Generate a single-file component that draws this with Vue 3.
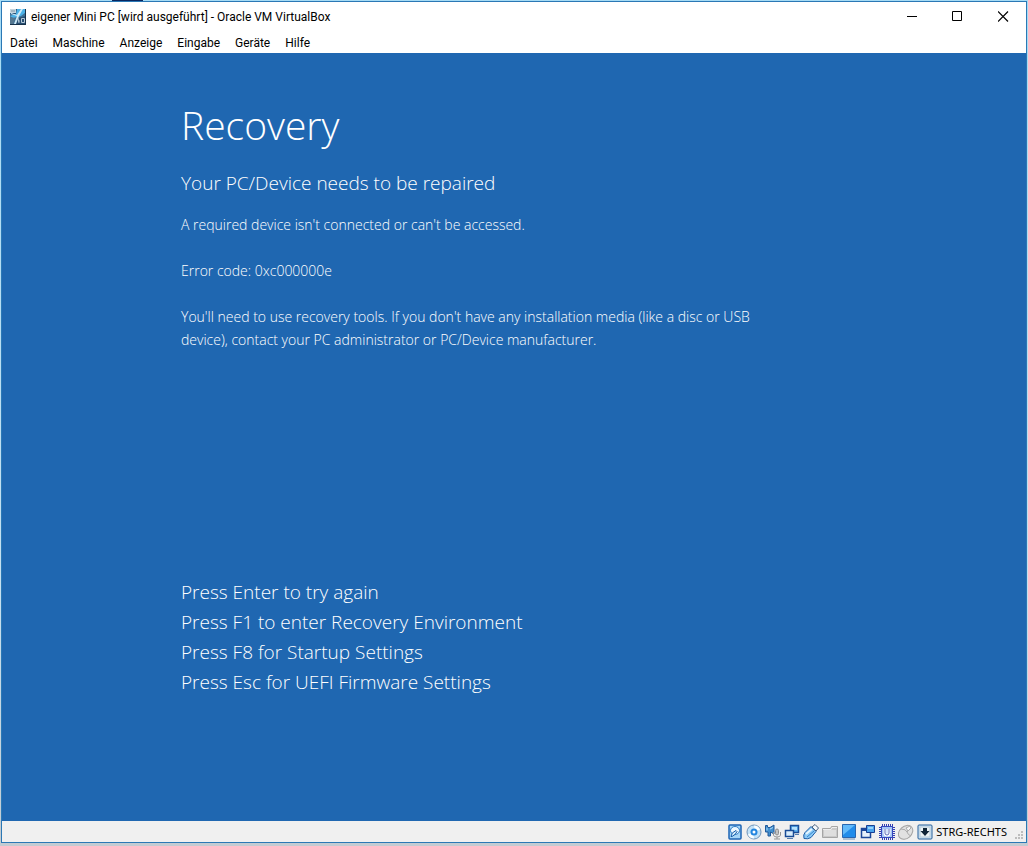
<script setup>
const menus = ['Datei', 'Maschine', 'Anzeige', 'Eingabe', 'Geräte', 'Hilfe']
const options = [
  'Press Enter to try again',
  'Press F1 to enter Recovery Environment',
  'Press F8 for Startup Settings',
  'Press Esc for UEFI Firmware Settings',
]
</script>

<template>
  <div class="desktop">
    <span class="backdrop-strip"></span>
    <div class="window">
      <header class="titlebar">
        <svg class="app-icon" viewBox="0 0 16 16" aria-hidden="true">
          <rect width="16" height="16" fill="#284f73" />
          <path d="M0 4l8 2 8-4v5l-8 2-3 7H0z" fill="#3f7196" />
          <path d="M0 0h6v4H0z" fill="#c4d5df" />
          <path d="M1 2h4" stroke="#8198a8" />
          <path d="M7 0h9v3l-5 4-8 2-3-2 6-2z" fill="#4cb2e8" />
          <path d="M11 0h2L9 7l-3 8H4l3-8-6-2V4l6 2z" fill="#cfeaf7" />
          <path d="M0 8l5 1-2 7H0z" fill="#557790" />
          <path d="M8 9l1 5M8 12h2M11.500 9.500h3v4h-3z" fill="none" stroke="#b5c9d8" />
          <path d="M0 15.500h16M15.500 0v16" stroke="#17324b" />
        </svg>
        <h1 class="title">eigener Mini PC [wird ausgeführt] - Oracle VM VirtualBox</h1>
        <div class="controls">
          <button type="button" aria-label="Minimieren">
            <svg viewBox="0 0 11 11"><path d="M1 5.500h10" /></svg>
          </button>
          <button type="button" aria-label="Maximieren">
            <svg viewBox="0 0 11 11"><path d="M.5 .5h9v9h-9z" /></svg>
          </button>
          <button type="button" aria-label="Schließen">
            <svg viewBox="0 0 11 11"><path d="M0 .5l10 10M10 .5l-10 10" stroke-width="1.200" /></svg>
          </button>
        </div>
      </header>

      <nav class="menubar">
        <button v-for="m in menus" :key="m" type="button">{{ m }}</button>
      </nav>

      <main class="screen">
        <h2>Recovery</h2>
        <h3>Your PC/Device needs to be repaired</h3>
        <div class="details">
          <p>A required device isn't connected or can't be accessed.</p>
          <p>Error code: 0xc000000e</p>
          <p>You'll need to use recovery tools. If you don't have any installation media (like a disc or USB<br />device), contact your PC administrator or PC/Device manufacturer.</p>
        </div>
        <ul class="options">
          <li v-for="o in options" :key="o">{{ o }}</li>
        </ul>
      </main>

      <footer class="statusbar">
        <svg viewBox="0 0 16 16" aria-label="Festplatte">
          <rect x="2" y="1" width="12" height="14" rx="1" fill="#a5d6f8" stroke="#1d64b4" stroke-width="1.500" />
          <ellipse cx="8" cy="6.500" rx="4.500" ry="4" fill="#eff9ff" stroke="#2c7bc5" />
          <path d="M4 12.500q0-4 5-6l1 1q-1 3-5 5z" fill="#d7effd" stroke="#165da9" />
        </svg>
        <svg viewBox="0 0 16 16" aria-label="CD-Laufwerk">
          <circle cx="8" cy="8" r="7" fill="#c2e2f8" stroke="#6f94ba" />
          <path d="M8 1.500a6.500 6.500 0 0 1 6 4L9 8zM8 14.500a6.500 6.500 0 0 1-6-4L7 8z" fill="#fbfeff" />
          <circle cx="8" cy="8" r="3.500" fill="#2486df" />
          <circle cx="8" cy="8" r="1.500" fill="#fff" />
        </svg>
        <svg viewBox="0 0 16 16" aria-label="Audio">
          <path d="M.5 1.500h2v2H5l4-2.500v9L5.500 8v4H3V8H.5z" fill="#438fce" stroke="#20599a" />
          <path d="M2 3.500v3M5 5l3-1.500" stroke="#a6dafa" />
          <rect x="10.500" y="5" width="3" height="6" rx="1.500" fill="#c2c2c2" stroke="#8e8e8e" />
          <path d="M8.500 8v3q0 2 3.500 2t3.500-2V8M12 13v2M9 15h6" fill="none" stroke="#969696" />
        </svg>
        <svg viewBox="0 0 16 16" aria-label="Netzwerk">
          <path d="M6.500 1.500h8v7h-8z" fill="#5eb3f2" stroke="#194c96" stroke-width="1.500" />
          <path d="M8 3h5v3H8z" fill="#b5e1fc" />
          <path d="M1.500 6.500h8v6h-8z" fill="#d9edfb" stroke="#194c96" stroke-width="1.500" />
          <path d="M11 10.500h4M3 14.500h6" stroke="#557eae" />
        </svg>
        <svg viewBox="0 0 16 16" aria-label="USB">
          <path d="M1 14.500q-1-4 1-6l6-6 5 5-5 6q-3 2-7 1z" fill="#8bc9f5" stroke="#1e5fa9" />
          <path d="M9 3l3-2.500 3.500 3.500L13 7z" fill="#f5f8fb" stroke="#47617f" />
          <path d="M3 10l6-5" stroke="#e4f5ff" stroke-width="2" />
          <path d="M4 13l7-6" stroke="#3486cf" />
        </svg>
        <svg viewBox="0 0 16 16" aria-label="Gemeinsame Ordner">
          <path d="M.5 4.500h8l1-2h6v11H.5z" fill="#c9c9c9" stroke="#a5a5a5" />
          <path d="M2 6h12v6H2z" fill="#dedede" />
          <path d="M1 5.500h8l1-2h5" fill="none" stroke="#eee" />
        </svg>
        <svg viewBox="0 0 16 16" aria-label="Anzeige">
          <path d="M1.500 .5h13v13h-13z" fill="#218cea" stroke="#2866b0" />
          <path d="M2 1h12L2 11z" fill="#61b9fa" />
          <path d="M2 15h12" stroke="#6b8fb8" />
        </svg>
        <svg viewBox="0 0 16 16" aria-label="Aufnahme">
          <path d="M1.500 4.500h9v9h-9z" fill="#e6f0fa" stroke="#1b4699" stroke-width="1.500" />
          <path d="M2 5h9v2H2z" fill="#1b4699" />
          <path d="M6.500 1.500h8v7h-8z" fill="#4aa3ed" stroke="#183f92" />
          <path d="M8 3h5v2H8z" fill="#96d2fb" />
        </svg>
        <svg viewBox="0 0 16 16" aria-label="CPU">
          <path d="M3 1h11M3 15h11M1 3v11M15 3v11" stroke="#3541b2" stroke-width="2" stroke-dasharray="1 1" />
          <rect x="2.500" y="2.500" width="11" height="11" fill="#a6c6f5" stroke="#3548bd" />
          <path d="M6 5v4q0 2 2 2t2-2V5" fill="none" stroke="#fff" stroke-width="3" />
          <path d="M6 5v4q0 2 2 2t2-2V5" fill="none" stroke="#5969b8" />
        </svg>
        <svg viewBox="0 0 16 16" aria-label="Mauszeiger">
          <ellipse cx="8" cy="8.500" rx="6" ry="8" transform="rotate(48 8 8)" fill="#e1e1e1" stroke="#a2a2a2" />
          <path d="M3 5q5 0 6 3t4 4M9 8l4-5" fill="none" stroke="#aaa" />
          <path d="M8 4l4-2 1 2-3 3z" fill="#f8f8f8" stroke="#aaa" />
        </svg>
        <svg viewBox="0 0 16 16" aria-label="Host-Taste">
          <rect x="1" y="1" width="14" height="14" rx="1" fill="#d2e4f2" stroke="#245e9a" />
          <rect x="3" y="3" width="10" height="10" fill="#edf3f5" stroke="#b5ccdc" />
          <path d="M6 4h4v3h2.500L8 12 3.500 7H6z" fill="#102538" />
        </svg>
        <span class="host-key">STRG-RECHTS</span>
        <svg class="grip" viewBox="0 0 9 9" aria-hidden="true">
          <path d="M6 0h2v2H6zM3 3h2v2H3zM6 3h2v2H6zM0 6h2v2H0zM3 6h2v2H3zM6 6h2v2H6z" fill="#bdbdbd" />
        </svg>
      </footer>
    </div>
  </div>
</template>

<style>
body {
  margin: 0;
}
</style>

<style scoped>
.desktop {
  position: relative;
  box-sizing: border-box;
  min-height: 100vh;
  padding: 1px 1px 3px;
  display: flex;
  background: linear-gradient(#a5dbf5, #c6e0f0 70%, #c3cbd2);
  font-family: Roboto, "Noto Sans", sans-serif;
}
.backdrop-strip {
  position: absolute;
  top: 0;
  left: 112px;
  width: 31px;
  height: 1px;
  background: #08265f;
}
.window {
  flex: 1;
  display: flex;
  flex-direction: column;
  border: 1px solid #2b78b5;
  background: #fff;
}
.titlebar {
  display: flex;
  align-items: center;
  height: 29px;
  padding-left: 8px;
}
.app-icon {
  width: 16px;
  height: 16px;
}
.title {
  flex: 1;
  margin: 0 0 0 5px;
  font-size: 12px;
  line-height: 16px;
  font-weight: 400;
  color: #000;
}
button {
  border: 0;
  padding: 0;
  background: none;
  font: inherit;
  color: #000;
}
.controls {
  display: flex;
}
.controls button {
  width: 46px;
  height: 29px;
  display: flex;
  align-items: center;
  justify-content: center;
}
.controls svg {
  width: 11px;
  height: 11px;
  fill: none;
  stroke: #000;
}
.menubar {
  display: flex;
  gap: 15px;
  height: 22px;
  padding-left: 8px;
  font-size: 12px;
  line-height: 24px;
}
.screen {
  flex: 1;
  padding: 45px 180px 0 179px;
  background: #1f67b1;
  color: #fff;
  font-family: "Open Sans", "Noto Sans", sans-serif;
  font-weight: 300;
}
.screen h2 {
  margin: 0;
  font-size: 39px;
  line-height: 54px;
  font-weight: 300;
}
.screen h3 {
  margin: 16px 0 0;
  font-size: 19px;
  line-height: 30px;
  font-weight: 300;
}
.details {
  margin-top: 15px;
  font-size: 14px;
  line-height: 23px;
  white-space: nowrap;
}
.details p {
  margin: 0 0 23px;
}
.options {
  margin: 226px 0 0;
  padding: 0;
  list-style: none;
  font-size: 19px;
  line-height: 30px;
}
.statusbar {
  display: flex;
  align-items: center;
  justify-content: flex-end;
  gap: 3px;
  height: 21px;
  background: #f0f0f0;
  color: #000;
}
.statusbar svg {
  width: 16px;
  height: 16px;
}
.host-key {
  font-family: "Noto Sans", sans-serif;
  font-size: 11px;
  line-height: 16px;
}
.statusbar .grip {
  width: 9px;
  height: 9px;
  align-self: flex-end;
  margin: 0 2px 2px 5px;
}
</style>
